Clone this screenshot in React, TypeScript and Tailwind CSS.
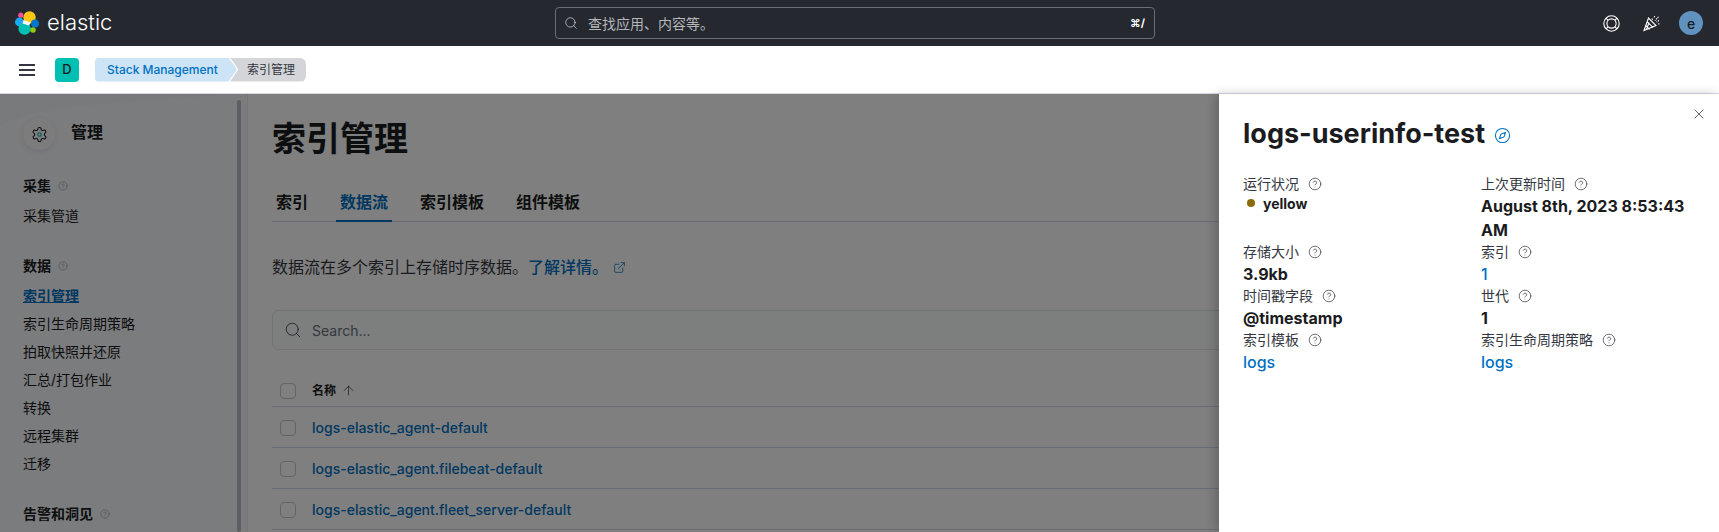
import React from "react";
import { CircleHelp, ExternalLink, Search, X, ArrowUp, Compass } from "lucide-react";

const FONT = "font-['Inter','Noto_Sans_CJK_SC',sans-serif]";

function Logo() {
  return (
    <svg width="24" height="24" viewBox="0 0 24 24" className="shrink-0">
      <circle cx="14.5" cy="6.5" r="6.2" fill="#fec514" />
      <circle cx="5.8" cy="4.2" r="2.6" fill="#f04e98" />
      <circle cx="4.4" cy="11" r="4.4" fill="#1ba9f5" />
      <circle cx="20" cy="12.4" r="4" fill="#0077cc" />
      <circle cx="9.6" cy="17.6" r="6.2" fill="#00bfb3" />
      <circle cx="18" cy="19" r="2.8" fill="#93c90e" />
      <path d="M8.5 9 L15.5 11.5 L14 14.5 L7.5 12.5 Z" fill="#fff" />
    </svg>
  );
}

function Buoy() {
  return (
    <svg width="17" height="17" viewBox="0 0 17 17" fill="none" stroke="#fff" strokeWidth="1.1">
      <circle cx="8.5" cy="8.5" r="7.7" />
      <circle cx="8.5" cy="8.5" r="4.6" />
      <path d="M3 3.2 L5.2 5.4 M14 3.2 L11.8 5.4 M3 13.8 L5.2 11.6 M14 13.8 L11.8 11.6" />
    </svg>
  );
}

function Cheer() {
  return (
    <svg width="17" height="17" viewBox="0 0 17 17" fill="none" stroke="#fff" strokeWidth="1.1">
      <path d="M1 15.5 L5.5 3 L13 10.5 Z" />
      <path d="M2.8 10.6 L6.6 14.3 M4.2 6.8 L10 12.4 M6 7.5 L3.5 14.5" />
      <path d="M9 3.5 L9.6 5.2 M11.6 1 L11.1 3.2 M15.5 1.8 L12 5.6 M16 5.6 L13.4 7 M16.5 9 L14.3 8.6" strokeDasharray="1.4 0.8" />
    </svg>
  );
}

function Gear() {
  return (
    <svg width="17" height="17" viewBox="0 0 24 24" fill="none" stroke="#1a1c21" strokeWidth="1.5">
      <path d="M12.22 2h-.44a2 2 0 0 0-2 2v.18a2 2 0 0 1-1 1.73l-.43.25a2 2 0 0 1-2 0l-.15-.08a2 2 0 0 0-2.73.73l-.22.38a2 2 0 0 0 .73 2.73l.15.1a2 2 0 0 1 1 1.72v.51a2 2 0 0 1-1 1.74l-.15.09a2 2 0 0 0-.73 2.73l.22.38a2 2 0 0 0 2.73.73l.15-.08a2 2 0 0 1 2 0l.43.25a2 2 0 0 1 1 1.73V20a2 2 0 0 0 2 2h.44a2 2 0 0 0 2-2v-.18a2 2 0 0 1 1-1.73l.43-.25a2 2 0 0 1 2 0l.15.08a2 2 0 0 0 2.73-.73l.22-.39a2 2 0 0 0-.73-2.73l-.15-.08a2 2 0 0 1-1-1.74v-.5a2 2 0 0 1 1-1.74l.15-.09a2 2 0 0 0 .73-2.73l-.22-.38a2 2 0 0 0-2.73-.73l-.15.08a2 2 0 0 1-2 0l-.43-.25a2 2 0 0 1-1-1.73V4a2 2 0 0 0-2-2z" />
      <circle cx="12" cy="12" r="2.4" stroke="#00bfb3" strokeWidth="1.6" />
    </svg>
  );
}

function Help() {
  return <CircleHelp size={14} strokeWidth={1.2} className="inline-block shrink-0 text-[#343741]" />;
}

function NavTitle({ label }: { label: string }) {
  return (
    <div className="h-[28px] mb-[2px] flex items-center gap-[7px] text-[14px] font-semibold text-[#1a1c21] leading-[28px]">
      {label}
      <CircleHelp size={10} strokeWidth={1} className="text-[#69707d]" />
    </div>
  );
}

function NavItem({ label, active }: { label: string; active?: boolean }) {
  return (
    <div className={`h-[28px] leading-[28px] text-[14px] ${active ? "text-[#0071c2] font-semibold underline" : "text-[#1a1c21]"}`}>
      {label}
    </div>
  );
}

function Tab({ label, active }: { label: string; active?: boolean }) {
  return (
    <div
      className={`h-[40px] pt-[2px] px-[4px] flex items-center text-[16px] font-semibold border-b-2 -mb-px ${
        active ? "border-[#0071c2] text-[#0071c2]" : "border-transparent text-[#1a1c21]"
      }`}
    >
      {label}
    </div>
  );
}

function Row({ label }: { label: string }) {
  return (
    <div className="h-[41px] flex items-center border-b border-[#d3dae6] px-[8px] text-[14px] text-[#0071c2] font-medium">
      <span className="w-[16px] h-[16px] mt-[2px] rounded-[4px] border border-[#c2c8d2] bg-white mr-[16px]" />
      {label}
    </div>
  );
}

function Field({ label, children }: { label: string; children: React.ReactNode }) {
  return (
    <div>
      <div className="h-[20px] leading-[20px] flex items-center gap-[9px] text-[14px] text-[#343741]">
        {label}
        <Help />
      </div>
      {children}
    </div>
  );
}

const valueCls = "text-[16px] leading-[24px] font-bold text-[#1a1c21]";
const linkCls = "text-[16px] leading-[24px] font-medium text-[#0071c2]";

export default function App() {
  return (
    <div className={`${FONT} w-[1719px] h-[532px] overflow-hidden flex flex-col bg-white`}>
      <header className="h-[46px] shrink-0 bg-[#25282f] flex items-center justify-between pl-[15px] pr-[16px]">
        <div className="w-[300px] flex items-center gap-[8px]">
          <Logo />
          <span className="text-[22px] font-light text-white leading-none -mt-[3px]">elastic</span>
        </div>
        <div className="w-[600px] h-[32px] -ml-[8px] rounded-[4px] border border-[#6a6d74] flex items-center pl-[8px] pr-[9px]">
          <Search size={14} strokeWidth={1} className="text-white" />
          <span className="ml-[10px] text-[14px] text-[#b4b6ba]">查找应用、内容等。</span>
          <span className="ml-auto text-[11px] font-bold text-white">⌘/</span>
        </div>
        <div className="w-[300px] flex items-center justify-end">
          <div className="mr-[23px]"><Buoy /></div>
          <div className="mr-[19px]"><Cheer /></div>
          <div className="w-[24px] h-[24px] rounded-full bg-[#6092c0] text-[#1a1c21] text-[14px] font-medium flex items-center justify-center">e</div>
        </div>
      </header>

      <div className="h-[48px] shrink-0 bg-white border-b border-[#d3dae6] flex items-center pl-[19px]">
        <div className="w-[16px] flex flex-col gap-[3px]">
          <span className="h-[2px] bg-[#343741]" />
          <span className="h-[2px] bg-[#343741]" />
          <span className="h-[2px] bg-[#343741]" />
        </div>
        <div className="ml-[20px] w-[24px] h-[24px] rounded-[4px] bg-[#00bfb3] text-[#1a1c21] text-[13px] font-medium flex items-center justify-center">D</div>
        <div className="ml-[16px] h-[24px] flex text-[12px] leading-[24px]">
          <div className="w-[142px] pl-[12px] rounded-l-[4px] bg-[#cce4f5] text-[#0071c2] font-medium [clip-path:polygon(0_0,94%_0,100%_50%,94%_100%,0_100%)]">
            Stack Management
          </div>
          <div className="w-[76px] -ml-[7px] pl-[17px] rounded-r-[6px] bg-[#d3d5d9] text-[#343741] [clip-path:polygon(0_0,100%_0,100%_100%,0_100%,11%_50%)]">
            索引管理
          </div>
        </div>
      </div>

      <div className="relative flex-1 flex min-h-0">
        <aside className="relative w-[248px] shrink-0 bg-[#f7f8fc] border-r border-[#e9edf3] pl-[23px] pt-[24px] overflow-hidden">
          <svg width="240" height="40" viewBox="0 0 240 40" className="absolute left-0 top-0">
            <path d="M0 32 C40 12 90 10 240 0 L0 0 Z" fill="#000" opacity="0.015" />
          </svg>
          <div className="relative flex items-center h-[32px] mb-[22px]">
            <div className="w-[32px] h-[32px] rounded-full bg-[#f9f9fb] shadow-[0_2px_6px_rgba(0,0,0,0.08)] flex items-center justify-center">
              <Gear />
            </div>
            <span className="ml-[16px] text-[16px] font-semibold text-[#1a1c21] -mt-[5px]">管理</span>
          </div>
          <NavTitle label="采集" />
          <NavItem label="采集管道" />
          <div className="h-[22px]" />
          <NavTitle label="数据" />
          <NavItem label="索引管理" active />
          <NavItem label="索引生命周期策略" />
          <NavItem label="拍取快照并还原" />
          <NavItem label="汇总/打包作业" />
          <NavItem label="转换" />
          <NavItem label="远程集群" />
          <NavItem label="迁移" />
          <div className="h-[22px]" />
          <NavTitle label="告警和洞见" />
          <div className="absolute left-[237px] top-[6px] bottom-0 w-[4px] rounded-full bg-[#babdc7]" />
        </aside>

        <main className="flex-1 min-w-0 bg-white pl-[24px] pt-[23px] overflow-hidden">
          <h1 className="text-[34px] leading-[44px] font-bold text-[#1a1c21]">索引管理</h1>
          <div className="mt-[21px] flex gap-[24px] border-b border-[#d3dae6] h-[40px]">
            <Tab label="索引" />
            <Tab label="数据流" active />
            <Tab label="索引模板" />
            <Tab label="组件模板" />
          </div>
          <div className="mt-[33px] h-[24px] flex items-center text-[16px] text-[#343741]">
            数据流在多个索引上存储时序数据。
            <span className="text-[#0071c2] font-medium">了解详情。</span>
            <ExternalLink size={13} strokeWidth={1.4} className="ml-[5px] text-[#0071c2]" />
          </div>
          <div className="mt-[31px] h-[40px] rounded-[6px] border border-[#e3e7ef] bg-[#fbfcfd] flex items-center pl-[11px] text-[14px] text-[#69707d]">
            <Search size={18} strokeWidth={1.1} className="text-[#343741]" />
            <span className="ml-[10px]">Search...</span>
          </div>
          <div className="mt-[23px] h-[34px] pt-[2px] flex items-center border-b border-[#d3dae6] px-[8px] text-[12px] font-semibold text-[#1a1c21]">
            <span className="w-[16px] h-[16px] rounded-[4px] border border-[#c2c8d2] bg-white mr-[16px]" />
            名称
            <ArrowUp size={15} strokeWidth={1} className="ml-[5px] text-[#1a1c21]" />
          </div>
          <Row label="logs-elastic_agent-default" />
          <Row label="logs-elastic_agent.filebeat-default" />
          <Row label="logs-elastic_agent.fleet_server-default" />
        </main>

        <div className="absolute inset-0 bg-black/50" />

        <section className="absolute right-0 top-0 bottom-0 w-[500px] bg-white px-[24px] pt-[20px] shadow-[-4px_0_10px_rgba(0,0,0,0.2)]">
          <X size={16} strokeWidth={1.2} className="absolute right-[12px] top-[12px] text-[#343741]" />
          <div className="h-[40px] flex items-center">
            <h2 className="text-[27px] leading-[40px] font-bold text-[#1a1c21]">logs-userinfo-test</h2>
            <Compass size={17} strokeWidth={1.5} className="ml-[9px] mt-[3px] text-[#0071c2]" />
          </div>
          <div className="mt-[20px] grid grid-cols-[238px_238px]">
            <Field label="运行状况">
              <div className="h-[18px] flex items-center text-[14px] font-bold text-[#1a1c21] pl-[4px]">
                <span className="w-[8px] h-[8px] rounded-full bg-[#8a6a0a] mr-[8px]" />
                yellow
              </div>
            </Field>
            <Field label="上次更新时间">
              <div className={`${valueCls} pr-[24px]`}>August 8th, 2023 8:53:43 AM</div>
            </Field>
            <Field label="存储大小"><div className={valueCls}>3.9kb</div></Field>
            <Field label="索引"><div className={linkCls}>1</div></Field>
            <Field label="时间戳字段"><div className={valueCls}>@timestamp</div></Field>
            <Field label="世代"><div className={valueCls}>1</div></Field>
            <Field label="索引模板"><div className={linkCls}>logs</div></Field>
            <Field label="索引生命周期策略"><div className={linkCls}>logs</div></Field>
          </div>
        </section>
      </div>
    </div>
  );
}
